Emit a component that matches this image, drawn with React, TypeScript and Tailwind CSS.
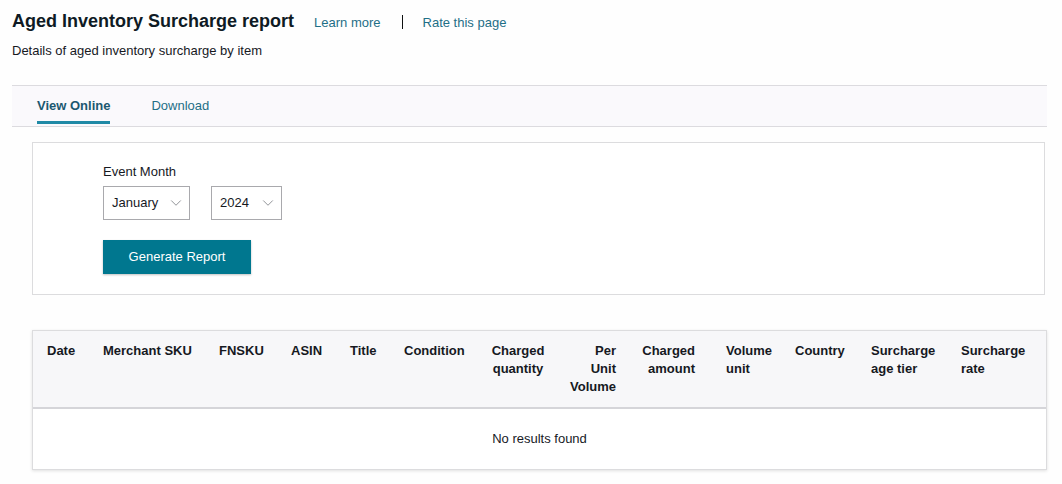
import { ChevronDown } from "lucide-react";

const columns = [
  { label: "Date", cell: "w-[56px]", inner: "" },
  { label: "Merchant SKU", cell: "w-[116px]", inner: "" },
  { label: "FNSKU", cell: "w-[72px]", inner: "" },
  { label: "ASIN", cell: "w-[59px]", inner: "" },
  { label: "Title", cell: "w-[54px]", inner: "" },
  { label: "Condition", cell: "w-[84px]", inner: "" },
  { label: "Charged quantity", cell: "w-[60px] flex justify-center", inner: "w-[56px] text-center" },
  { label: "Per Unit Volume", cell: "w-[68px] flex justify-end", inner: "w-[46px] text-right" },
  { label: "Charged amount", cell: "w-[79px] flex justify-end", inner: "w-[54px] text-right" },
  { label: "Volume unit", cell: "w-[100px] pl-[31px]", inner: "w-[56px]" },
  { label: "Country", cell: "w-[76px]", inner: "" },
  { label: "Surcharge age tier", cell: "w-[90px]", inner: "w-[66px]" },
  { label: "Surcharge rate", cell: "w-[70px]", inner: "w-[66px]" },
];

function Select({ value, width }: { value: string; width: string }) {
  return (
    <div
      className={`${width} h-[34px] border border-[#a9a9ad] bg-white flex items-center justify-between pl-[8px] pr-[4px] text-[13px] text-[#16191f]`}
    >
      <span>{value}</span>
      <ChevronDown size={18} strokeWidth={1.3} className="text-[#8f9196]" />
    </div>
  );
}

export default function App() {
  return (
    <div
      className="w-[1062px] h-[484px] bg-[#fefefe] overflow-hidden text-[#111a22]"
      style={{ fontFamily: '"Liberation Sans", Arial, sans-serif' }}
    >
      <div className="pl-[12px] pr-[15px] pt-[9px]">
        <div className="flex items-baseline h-[24px]">
          <h1 className="text-[18px] font-bold leading-[24px] text-[#0e1a24]">
            Aged Inventory Surcharge report
          </h1>
          <a className="ml-[20px] text-[13px] text-[#1f6f87]">Learn more</a>
          <span className="ml-[21px] self-center mt-[2px] w-px h-[14px] bg-[#0f1111]" />
          <a className="ml-[20px] text-[13px] text-[#1f6f87]">Rate this page</a>
        </div>
        <p className="mt-[9px] text-[13px] leading-[18px] text-[#16191f]">
          Details of aged inventory surcharge by item
        </p>

        <div className="mt-[25px] h-[42px] border-y border-[#dcdbdf] bg-[#faf9fc] flex pl-[25px] gap-[41px]">
          <div className="pt-[11px] pb-[6px] border-b-[3px] border-[#1f8aa6] h-[38px] text-[13px] leading-[18px] font-bold text-[#1b5870]">
            View Online
          </div>
          <div className="pt-[11px] text-[13px] leading-[18px] text-[#1f6f87]">
            Download
          </div>
        </div>
      </div>

      <div className="pl-[32px] pr-[15px]">
        <div className="mt-[15px] mr-[2px] h-[153px] border border-[#dcdcde] bg-white pl-[70px] pt-[20px]">
          <div className="text-[13px] leading-[18px] text-[#16191f]">Event Month</div>
          <div className="mt-[5px] flex gap-[21px]">
            <Select value="January" width="w-[87px]" />
            <Select value="2024" width="w-[71px]" />
          </div>
          <button className="mt-[20px] w-[148px] h-[34px] bg-[#00778f] text-white text-[13px] shadow-[0_1px_2px_rgba(0,0,0,0.25)]">
            Generate Report
          </button>
        </div>

        <div className="mt-[35px] border border-[#dcdcde] shadow-[0_1px_3px_rgba(0,0,0,0.12)] bg-white">
          <div className="h-[78px] bg-[#f7f7f9] border-b-2 border-[#d5d5d9] flex pl-[14px] pt-[11px] text-[13px] leading-[18px] font-bold text-[#16191f]">
            {columns.map((c) => (
              <div key={c.label} className={c.cell}>
                <div className={c.inner}>{c.label}</div>
              </div>
            ))}
          </div>
          <div className="h-[60px] pb-[1px] flex items-center justify-center text-[13px] text-[#16191f]">
            No results found
          </div>
        </div>
      </div>
    </div>
  );
}
